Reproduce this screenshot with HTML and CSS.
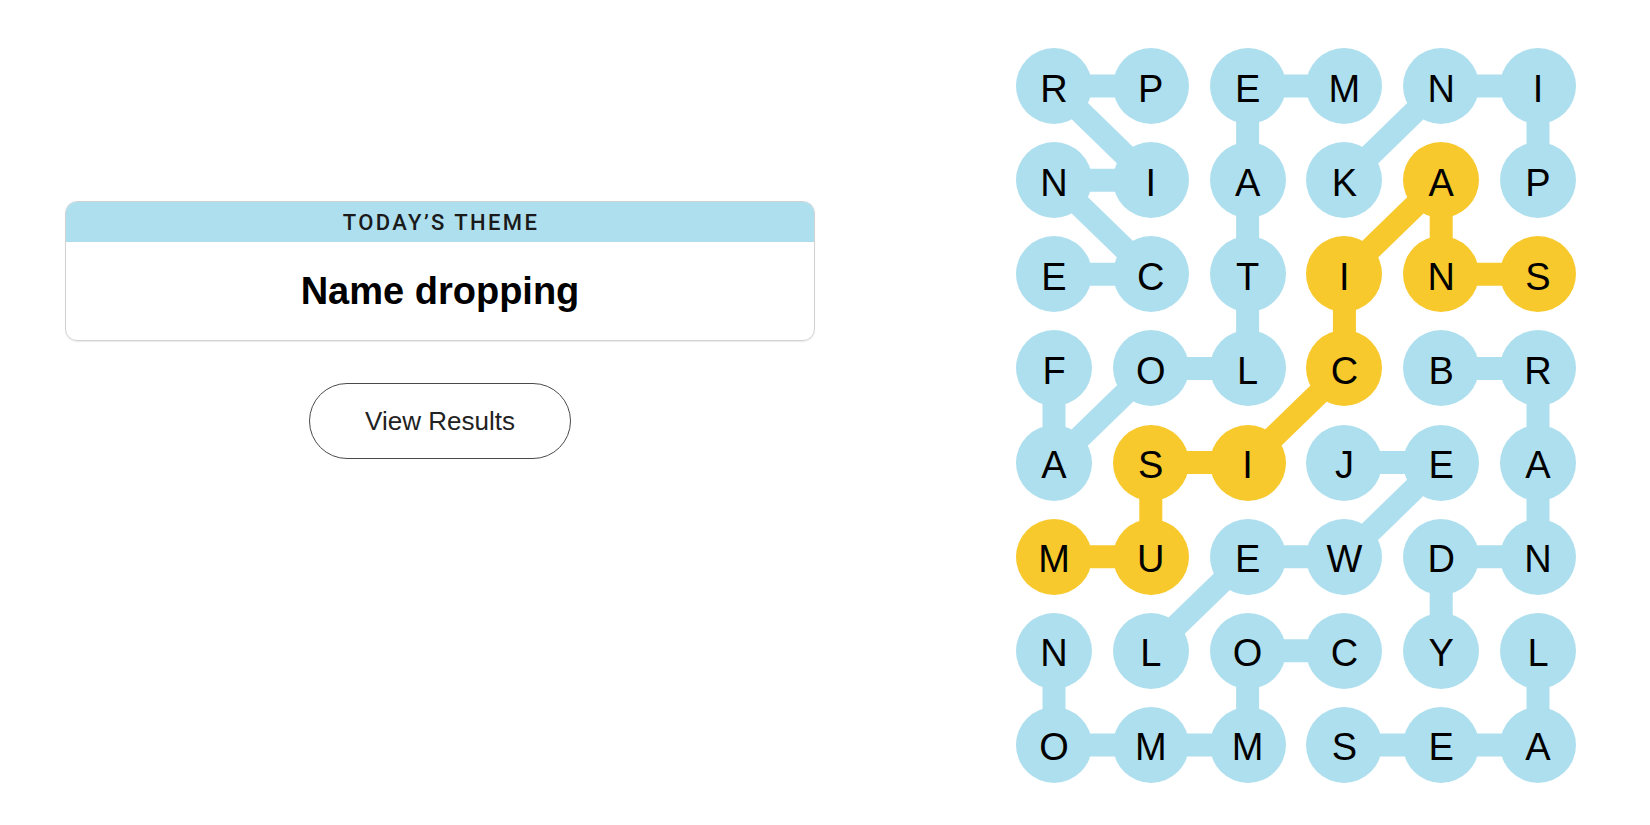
FILE: index.html
```html
<!DOCTYPE html>
<html lang="en">
<head>
<meta charset="utf-8">
<title>Strands</title>
<link rel="stylesheet" href="styles.css">
</head>
<body>
<main class="page">
  <section class="left">
    <div class="theme-card">
      <div class="theme-header">TODAY’S THEME</div>
      <div class="theme-body">Name dropping</div>
    </div>
    <button class="results-btn" type="button">View Results</button>
  </section>

  <section class="board">
    <svg class="links" width="560" height="735" viewBox="0 0 560 735" aria-hidden="true">
      <g class="blue">
        <line x1="38" y1="38" x2="134.8" y2="38"/>
        <line x1="38" y1="38" x2="134.8" y2="132.14"/>
        <line x1="38" y1="132.14" x2="134.8" y2="132.14"/>
        <line x1="38" y1="132.14" x2="134.8" y2="226.28"/>
        <line x1="38" y1="226.28" x2="134.8" y2="226.28"/>
        <line x1="231.6" y1="38" x2="328.4" y2="38"/>
        <line x1="231.6" y1="38" x2="231.6" y2="132.14"/>
        <line x1="231.6" y1="132.14" x2="231.6" y2="226.28"/>
        <line x1="231.6" y1="226.28" x2="231.6" y2="320.42"/>
        <line x1="231.6" y1="320.42" x2="134.8" y2="320.42"/>
        <line x1="134.8" y1="320.42" x2="38" y2="414.56"/>
        <line x1="38" y1="414.56" x2="38" y2="320.42"/>
        <line x1="425.2" y1="38" x2="522" y2="38"/>
        <line x1="425.2" y1="38" x2="328.4" y2="132.14"/>
        <line x1="522" y1="38" x2="522" y2="132.14"/>
        <line x1="425.2" y1="320.42" x2="522" y2="320.42"/>
        <line x1="522" y1="320.42" x2="522" y2="414.56"/>
        <line x1="522" y1="414.56" x2="522" y2="508.7"/>
        <line x1="522" y1="508.7" x2="425.2" y2="508.7"/>
        <line x1="425.2" y1="508.7" x2="425.2" y2="602.84"/>
        <line x1="328.4" y1="414.56" x2="425.2" y2="414.56"/>
        <line x1="425.2" y1="414.56" x2="328.4" y2="508.7"/>
        <line x1="328.4" y1="508.7" x2="231.6" y2="508.7"/>
        <line x1="231.6" y1="508.7" x2="134.8" y2="602.84"/>
        <line x1="38" y1="602.84" x2="38" y2="696.98"/>
        <line x1="38" y1="696.98" x2="134.8" y2="696.98"/>
        <line x1="134.8" y1="696.98" x2="231.6" y2="696.98"/>
        <line x1="231.6" y1="696.98" x2="231.6" y2="602.84"/>
        <line x1="231.6" y1="602.84" x2="328.4" y2="602.84"/>
        <line x1="328.4" y1="696.98" x2="425.2" y2="696.98"/>
        <line x1="425.2" y1="696.98" x2="522" y2="696.98"/>
        <line x1="522" y1="696.98" x2="522" y2="602.84"/>
      </g>
      <g class="gold">
        <line x1="38" y1="508.7" x2="134.8" y2="508.7"/>
        <line x1="134.8" y1="508.7" x2="134.8" y2="414.56"/>
        <line x1="134.8" y1="414.56" x2="231.6" y2="414.56"/>
        <line x1="231.6" y1="414.56" x2="328.4" y2="320.42"/>
        <line x1="328.4" y1="320.42" x2="328.4" y2="226.28"/>
        <line x1="328.4" y1="226.28" x2="425.2" y2="132.14"/>
        <line x1="425.2" y1="132.14" x2="425.2" y2="226.28"/>
        <line x1="425.2" y1="226.28" x2="522" y2="226.28"/>
      </g>
    </svg>
    <div class="grid">
      <span class="cell">R</span><span class="cell">P</span><span class="cell">E</span><span class="cell">M</span><span class="cell">N</span><span class="cell">I</span>
      <span class="cell">N</span><span class="cell">I</span><span class="cell">A</span><span class="cell">K</span><span class="cell spangram">A</span><span class="cell">P</span>
      <span class="cell">E</span><span class="cell">C</span><span class="cell">T</span><span class="cell spangram">I</span><span class="cell spangram">N</span><span class="cell spangram">S</span>
      <span class="cell">F</span><span class="cell">O</span><span class="cell">L</span><span class="cell spangram">C</span><span class="cell">B</span><span class="cell">R</span>
      <span class="cell">A</span><span class="cell spangram">S</span><span class="cell spangram">I</span><span class="cell">J</span><span class="cell">E</span><span class="cell">A</span>
      <span class="cell spangram">M</span><span class="cell spangram">U</span><span class="cell">E</span><span class="cell">W</span><span class="cell">D</span><span class="cell">N</span>
      <span class="cell">N</span><span class="cell">L</span><span class="cell">O</span><span class="cell">C</span><span class="cell">Y</span><span class="cell">L</span>
      <span class="cell">O</span><span class="cell">M</span><span class="cell">M</span><span class="cell">S</span><span class="cell">E</span><span class="cell">A</span>
    </div>
  </section>
</main>
</body>
</html>
```

FILE: styles.css
```css
* {
  box-sizing: border-box;
}

html, body {
  margin: 0;
  padding: 0;
  background: #ffffff;
}

body {
  font-family: "Liberation Sans", Arial, sans-serif;
  color: #121212;
  width: 1650px;
  height: 825px;
  overflow: hidden;
}

.page {
  display: flex;
  align-items: flex-start;
  padding-top: 48px;
}

.left {
  width: 750px;
  margin-left: 65px;
  padding-top: 153px;
  display: flex;
  flex-direction: column;
  align-items: center;
}

.theme-card {
  width: 750px;
  border: 1px solid #d2d2d2;
  border-radius: 12px;
  overflow: hidden;
  box-shadow: 0 1px 1px rgba(0, 0, 0, 0.08);
}

.theme-header {
  height: 40px;
  background: #aedfee;
  display: flex;
  align-items: center;
  justify-content: center;
  font-family: Roboto, "Liberation Sans", Arial, sans-serif;
  font-weight: 500;
  font-size: 22px;
  letter-spacing: 2.4px;
  color: #1a1a1a;
  padding-left: 2px;
}

.theme-body {
  height: 98px;
  display: flex;
  align-items: center;
  justify-content: center;
  font-size: 38px;
  font-weight: 700;
  color: #000;
}

.results-btn {
  margin-top: 42px;
  width: 262px;
  height: 76px;
  border: 1px solid #4a4a4a;
  border-radius: 38px;
  background: #fff;
  font-family: "Liberation Sans", Arial, sans-serif;
  font-size: 26px;
  color: #222;
  padding: 0;
}

.board {
  position: relative;
  margin-left: 201px;
  width: 560px;
  height: 735px;
}

.links {
  position: absolute;
  left: 0;
  top: 0;
}

.links line {
  stroke-width: 23;
  stroke-linecap: butt;
}

.blue line {
  stroke: #aedfee;
}

.gold line {
  stroke: #f7c92c;
}

.grid {
  position: relative;
  display: grid;
  grid-template-columns: repeat(6, 76px);
  grid-template-rows: repeat(8, 76px);
  column-gap: 20.8px;
  row-gap: 18.14px;
}

.cell {
  width: 76px;
  height: 76px;
  border-radius: 50%;
  background: #aedfee;
  display: flex;
  align-items: center;
  justify-content: center;
  font-size: 38px;
  color: #000;
  padding-top: 6px;
}

.cell.spangram {
  background: #f7c92c;
}
```
